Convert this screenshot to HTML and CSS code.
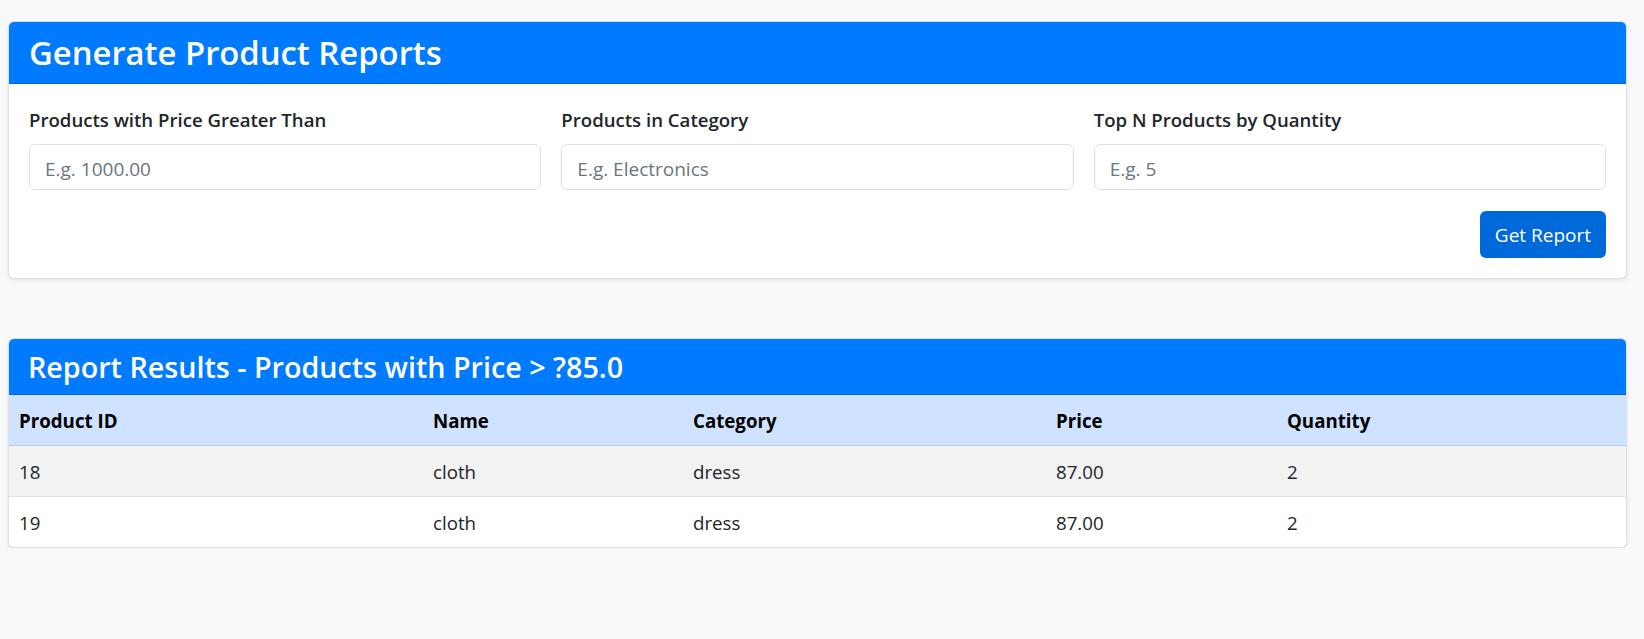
FILE: index.html
```html
<!DOCTYPE html>
<html lang="en">
<head>
<meta charset="utf-8">
<title>Generate Product Reports</title>
<link rel="stylesheet" href="styles.css">
</head>
<body>
<main class="page">
  <section class="card card-form">
    <header class="card-header">
      <h2 class="card-title">Generate Product Reports</h2>
    </header>
    <div class="card-body">
      <div class="fields">
        <div class="field">
          <label class="field-label" for="price">Products with Price Greater Than</label>
          <input class="field-input" id="price" type="text" placeholder="E.g. 1000.00">
        </div>
        <div class="field">
          <label class="field-label" for="category">Products in Category</label>
          <input class="field-input" id="category" type="text" placeholder="E.g. Electronics">
        </div>
        <div class="field">
          <label class="field-label" for="topn">Top N Products by Quantity</label>
          <input class="field-input" id="topn" type="text" placeholder="E.g. 5">
        </div>
      </div>
      <div class="actions">
        <button class="btn-primary" type="button">Get Report</button>
      </div>
    </div>
  </section>

  <section class="card card-results">
    <header class="card-header card-header-sm">
      <h3 class="card-title-sm">Report Results - Products with Price &gt; ?85.0</h3>
    </header>
    <table class="results">
      <colgroup>
        <col class="col-id"><col class="col-name"><col class="col-cat"><col class="col-price"><col class="col-qty">
      </colgroup>
      <thead>
        <tr><th>Product ID</th><th>Name</th><th>Category</th><th>Price</th><th>Quantity</th></tr>
      </thead>
      <tbody>
        <tr class="row-odd"><td>18</td><td>cloth</td><td>dress</td><td>87.00</td><td>2</td></tr>
        <tr><td>19</td><td>cloth</td><td>dress</td><td>87.00</td><td>2</td></tr>
      </tbody>
    </table>
  </section>
</main>
</body>
</html>
```
FILE: styles.css
```css
* { box-sizing: border-box; }

html, body {
  margin: 0;
  background: #f8f9fa;
}

body {
  font-family: "Open Sans", "Noto Sans", "DejaVu Sans", sans-serif;
  color: #212529;
}

.page {
  padding: 21px 17px 0 8px;
}

.card {
  background: #fff;
  border: 1px solid rgba(0, 0, 0, 0.125);
  border-radius: 6px;
  box-shadow: 0 2px 4px rgba(0, 0, 0, 0.08);
  overflow: hidden;
}

.card-results {
  margin-top: 59px;
}

.card-header {
  background: #007bff;
  color: #fff;
  height: 62px;
  padding: 0 20px;
  display: flex;
  align-items: center;
  border-bottom: 1px solid #0068d6;
}

.card-header-sm {
  height: 56px;
  padding: 0 19px;
}

.card-title {
  margin: 0;
  font-size: 32.8px;
  font-weight: 600;
  line-height: 1;
  position: relative;
  top: 1px;
}

.card-title-sm {
  margin: 0;
  font-size: 28.7px;
  font-weight: 600;
  line-height: 1;
  position: relative;
  top: 1px;
}

.card-body {
  padding: 20px;
}

.fields {
  display: grid;
  grid-template-columns: repeat(3, 1fr);
  column-gap: 20px;
}

.field {
  display: flex;
  flex-direction: column;
}

.field-label {
  font-size: 18.6px;
  font-weight: 600;
  line-height: 27px;
  padding-top: 2px;
  margin-bottom: 11px;
  color: #212529;
}

.field-input {
  height: 46px;
  border: 1px solid #dee2e6;
  border-radius: 6px;
  padding: 3px 15px 0;
  font-family: inherit;
  font-size: 19px;
  color: #212529;
  background: #fff;
  outline: none;
}

.field-input::placeholder {
  color: #6c757d;
}

.actions {
  display: flex;
  justify-content: flex-end;
  margin-top: 21px;
}

.btn-primary {
  height: 47px;
  padding: 2px 15px 0;
  background: #0069d9;
  color: #fff;
  border: 0;
  border-radius: 6px;
  font-family: inherit;
  font-size: 19px;
  line-height: 1;
}

.results {
  width: 100%;
  border-collapse: collapse;
  table-layout: fixed;
  font-size: 18.7px;
}

.col-id { width: 414px; }
.col-name { width: 260px; }
.col-cat { width: 363px; }
.col-price { width: 231px; }
.col-qty { width: auto; }

.results th,
.results td {
  text-align: left;
  padding: 1px 10px 0;
  height: 51px;
  vertical-align: middle;
}

.results th {
  background: #cfe2ff;
  color: #000;
  font-weight: 700;
  height: 50px;
  border-bottom: 1px solid #b9cbe6;
}

.results td {
  border-bottom: 1px solid #dee2e6;
}

.results tbody tr:last-child td {
  border-bottom: 0;
  height: 51px;
}

.row-odd td {
  background: #f2f2f2;
}
```
